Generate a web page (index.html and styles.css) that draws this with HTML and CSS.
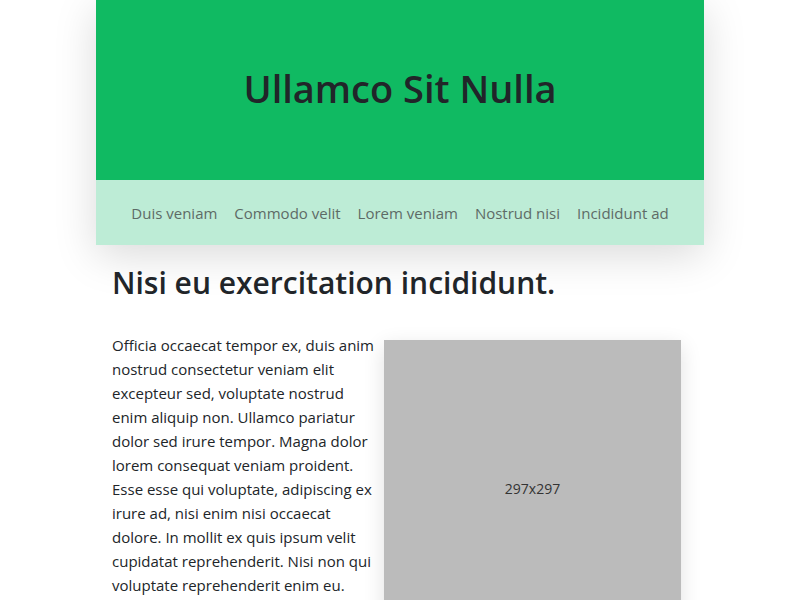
FILE: index.html
```html
<!DOCTYPE html>
<html lang="en">
<head>
<meta charset="utf-8">
<title>Ullamco Sit Nulla</title>
<link rel="stylesheet" href="styles.css">
</head>
<body>
<div class="page">
  <header class="masthead">
    <div class="hero">
      <h1 class="title">Ullamco Sit Nulla</h1>
    </div>
    <nav class="nav">
      <a href="#">Duis veniam</a>
      <a href="#">Commodo velit</a>
      <a href="#">Lorem veniam</a>
      <a href="#">Nostrud nisi</a>
      <a href="#">Incididunt ad</a>
    </nav>
  </header>
  <main class="content">
    <h2 class="heading">Nisi eu exercitation incididunt.</h2>
    <div class="row">
      <p class="text">Officia occaecat tempor ex, duis anim nostrud consectetur veniam elit excepteur sed, voluptate nostrud enim aliquip non. Ullamco pariatur dolor sed irure tempor. Magna dolor lorem consequat veniam proident. Esse esse qui voluptate, adipiscing ex irure ad, nisi enim nisi occaecat dolore. In mollit ex quis ipsum velit cupidatat reprehenderit. Nisi non qui voluptate reprehenderit enim eu.</p>
      <div class="placeholder">297x297</div>
    </div>
  </main>
</div>
</body>
</html>
```

FILE: styles.css
```css
html, body {
  margin: 0;
  padding: 0;
  background: #ffffff;
}
body {
  font-family: "Open Sans", "Noto Sans", sans-serif;
  color: #212529;
}
.page {
  width: 608px;
  margin: 0 auto;
}
.masthead {
  box-shadow: 0 10px 40px rgba(0, 0, 0, 0.15);
}
.hero {
  height: 180px;
  background: #10ba62;
  display: flex;
  align-items: center;
  justify-content: center;
}
.title {
  margin: 0 0 5px;
  font-size: 38px;
  font-weight: 600;
  color: #212529;
}
.nav {
  height: 65px;
  background: #bdecd6;
  display: flex;
  align-items: center;
  justify-content: center;
  gap: 17px;
}
.nav a {
  color: #5d6b66;
  text-decoration: none;
  font-size: 15px;
}
.content {
  padding: 18px 16px 0;
}
.heading {
  margin: 0 0 30px;
  font-size: 30px;
  font-weight: 600;
  line-height: 40px;
}
.row {
  display: flex;
  gap: 8px;
  align-items: flex-start;
}
.text {
  margin: 0;
  width: 264px;
  font-size: 15px;
  line-height: 24px;
}
.placeholder {
  width: 297px;
  height: 297px;
  flex: none;
  margin-top: 7px;
  background: #bbbbbb;
  color: #333;
  display: flex;
  align-items: center;
  justify-content: center;
  font-size: 14px;
  box-shadow: 0 6px 20px rgba(0, 0, 0, 0.12);
}
```
